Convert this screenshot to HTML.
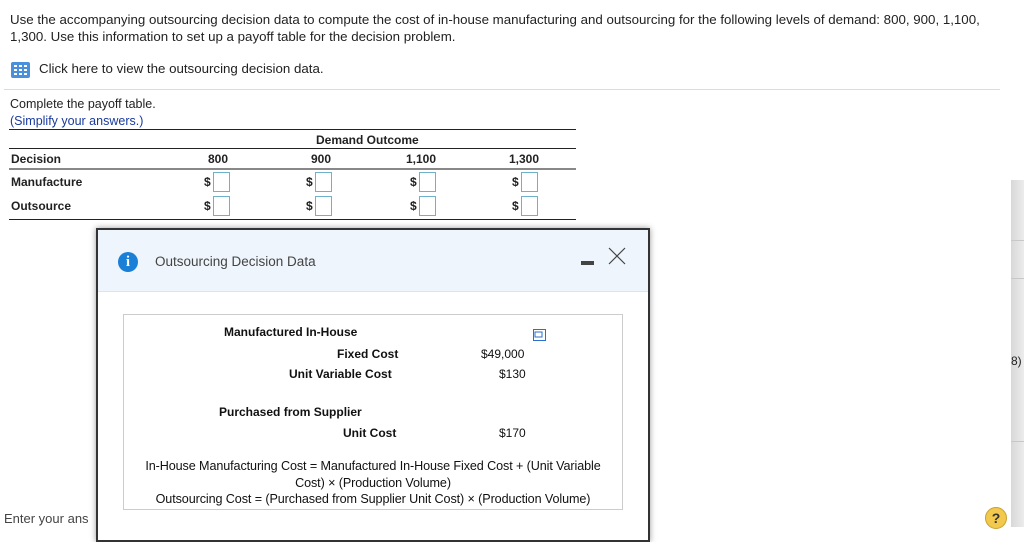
<!DOCTYPE html>
<html><head><style>
body{margin:0;width:1024px;height:527px;overflow:hidden;background:#fff;font-family:"Liberation Sans",Arial,sans-serif;color:#222;position:relative}
.a{position:absolute;white-space:nowrap}
.b{font-weight:bold}
.inp{position:absolute;width:15px;height:18px;border:1px solid #6fb1c9;background:#fff}
.dl{position:absolute;font-size:12px;font-weight:bold}
</style></head><body>
<div class="a" style="left:10px;top:11px;font-size:13.3px;line-height:17px;color:#222">Use the accompanying outsourcing decision data to compute the cost of in-house manufacturing and outsourcing for the following levels of demand: 800, 900, 1,100,<br>1,300. Use this information to set up a payoff table for the decision problem.</div>
<svg class="a" style="left:11px;top:62px" width="19" height="16"><rect x="0" y="0" width="19" height="16" rx="2" fill="#4a8fdc"/><g fill="#fff"><rect x="3" y="3" width="3" height="2"/><rect x="8" y="3" width="3" height="2"/><rect x="13" y="3" width="3" height="2"/><rect x="3" y="7" width="3" height="2"/><rect x="8" y="7" width="3" height="2"/><rect x="13" y="7" width="3" height="2"/><rect x="3" y="11" width="3" height="2"/><rect x="8" y="11" width="3" height="2"/><rect x="13" y="11" width="3" height="2"/></g></svg>
<div class="a" style="left:39px;top:61px;font-size:13.3px">Click here to view the outsourcing decision data.</div>
<div class="a" style="left:4px;top:89px;width:996px;height:1px;background:#d6dde6"></div>
<div class="a" style="left:10px;top:97px;font-size:12.5px">Complete the payoff table.</div>
<div class="a" style="left:10px;top:114px;font-size:12.5px;color:#1a3a9c">(Simplify your answers.)</div>
<div class="a" style="left:9px;top:129px;width:567px;height:1px;background:#222"></div>
<div class="a b" style="left:316px;top:133px;font-size:12px">Demand Outcome</div>
<div class="a" style="left:9px;top:148px;width:567px;height:1px;background:#222"></div>
<div class="a b" style="left:11px;top:152px;font-size:12px">Decision</div>
<div class="a b" style="left:208px;top:152px;font-size:12px">800</div>
<div class="a b" style="left:311px;top:152px;font-size:12px">900</div>
<div class="a b" style="left:406px;top:152px;font-size:12px">1,100</div>
<div class="a b" style="left:509px;top:152px;font-size:12px">1,300</div>
<div class="a" style="left:9px;top:168px;width:567px;height:2px;background:#888"></div>
<div class="a b" style="left:11px;top:175px;font-size:12px">Manufacture</div>
<div class="a b" style="left:11px;top:199px;font-size:12px">Outsource</div>
<div class="a" style="left:9px;top:219px;width:567px;height:1px;background:#222"></div>
<div class="dl" style="left:204px;top:175px">$</div><div class="inp" style="left:213px;top:172px"></div>
<div class="dl" style="left:306px;top:175px">$</div><div class="inp" style="left:315px;top:172px"></div>
<div class="dl" style="left:410px;top:175px">$</div><div class="inp" style="left:419px;top:172px"></div>
<div class="dl" style="left:512px;top:175px">$</div><div class="inp" style="left:521px;top:172px"></div>
<div class="dl" style="left:204px;top:199px">$</div><div class="inp" style="left:213px;top:196px"></div>
<div class="dl" style="left:306px;top:199px">$</div><div class="inp" style="left:315px;top:196px"></div>
<div class="dl" style="left:410px;top:199px">$</div><div class="inp" style="left:419px;top:196px"></div>
<div class="dl" style="left:512px;top:199px">$</div><div class="inp" style="left:521px;top:196px"></div>
<div class="a" style="left:1011px;top:180px;width:13px;height:347px;background:linear-gradient(90deg,#d8d8d8,#ececec)"></div>
<div class="a" style="left:1011px;top:240px;width:13px;height:1px;background:#c8c8c8"></div>
<div class="a" style="left:1011px;top:278px;width:13px;height:1px;background:#c8c8c8"></div>
<div class="a" style="left:1011px;top:441px;width:13px;height:1px;background:#c8c8c8"></div>
<div class="a" style="left:1011px;top:354px;font-size:12px">8)</div>
<div class="a" style="left:985px;top:507px;width:20px;height:20px;border-radius:50%;background:#f2c94c;border:1px solid #c9a033;font-weight:bold;font-size:14px;text-align:center;line-height:20px;color:#333">?</div>
<div class="a" style="left:4px;top:511px;font-size:13px;color:#444">Enter your ans</div>
<div class="a" style="left:96px;top:228px;width:550px;height:310px;border:2px solid #333;background:#fff;box-shadow:0 0 6px rgba(0,0,0,.4)">
 <div style="position:absolute;left:0;top:0;width:550px;height:61px;background:#eef5fc;border-bottom:1px solid #d6e6f6"></div>
 <div style="position:absolute;left:20px;top:22px;width:20px;height:20px;border-radius:50%;background:#1a7fd6;color:#fff;font-weight:bold;font-family:'Liberation Serif',serif;font-size:15px;text-align:center;line-height:20px">i</div>
 <div class="a" style="left:57px;top:24px;font-size:13.5px;color:#444">Outsourcing Decision Data</div>
 <div class="a" style="left:483px;top:31px;width:13px;height:4px;background:#444"></div>
 <svg class="a" style="left:510px;top:17px" width="18" height="18"><path d="M1 1L17 17M17 1L1 17" stroke="#444" stroke-width="1.2"/></svg>
 <div class="a" style="left:25px;top:84px;width:498px;height:194px;border:1px solid #ccc"></div>
 <svg class="a" style="left:435px;top:99px" width="13" height="12"><rect x=".5" y=".5" width="12" height="11" fill="none" stroke="#2a6fd0"/><rect x="2" y="3" width="7" height="5" fill="none" stroke="#2a6fd0"/></svg>
 <div class="a b" style="left:126px;top:95px;font-size:12px;color:#111">Manufactured In-House</div>
 <div class="a b" style="left:239px;top:117px;font-size:12px;color:#111">Fixed Cost</div>
 <div class="a b" style="left:191px;top:137px;font-size:12px;color:#111">Unit Variable Cost</div>
 <div class="a" style="left:383px;top:117px;font-size:12px;color:#111">$49,000</div>
 <div class="a" style="left:401px;top:137px;font-size:12px;color:#111">$130</div>
 <div class="a b" style="left:121px;top:175px;font-size:12px;color:#111">Purchased from Supplier</div>
 <div class="a b" style="left:245px;top:196px;font-size:12px;color:#111">Unit Cost</div>
 <div class="a" style="left:401px;top:196px;font-size:12px;color:#111">$170</div>
 <div class="a" style="left:25px;top:228px;width:500px;text-align:center;white-space:normal;font-size:12.6px;letter-spacing:-0.1px;line-height:16.5px;color:#111">In-House Manufacturing Cost = Manufactured In-House Fixed Cost + (Unit Variable<br>Cost) × (Production Volume)<br>Outsourcing Cost = (Purchased from Supplier Unit Cost) × (Production Volume)</div>
</div>
</body></html>
